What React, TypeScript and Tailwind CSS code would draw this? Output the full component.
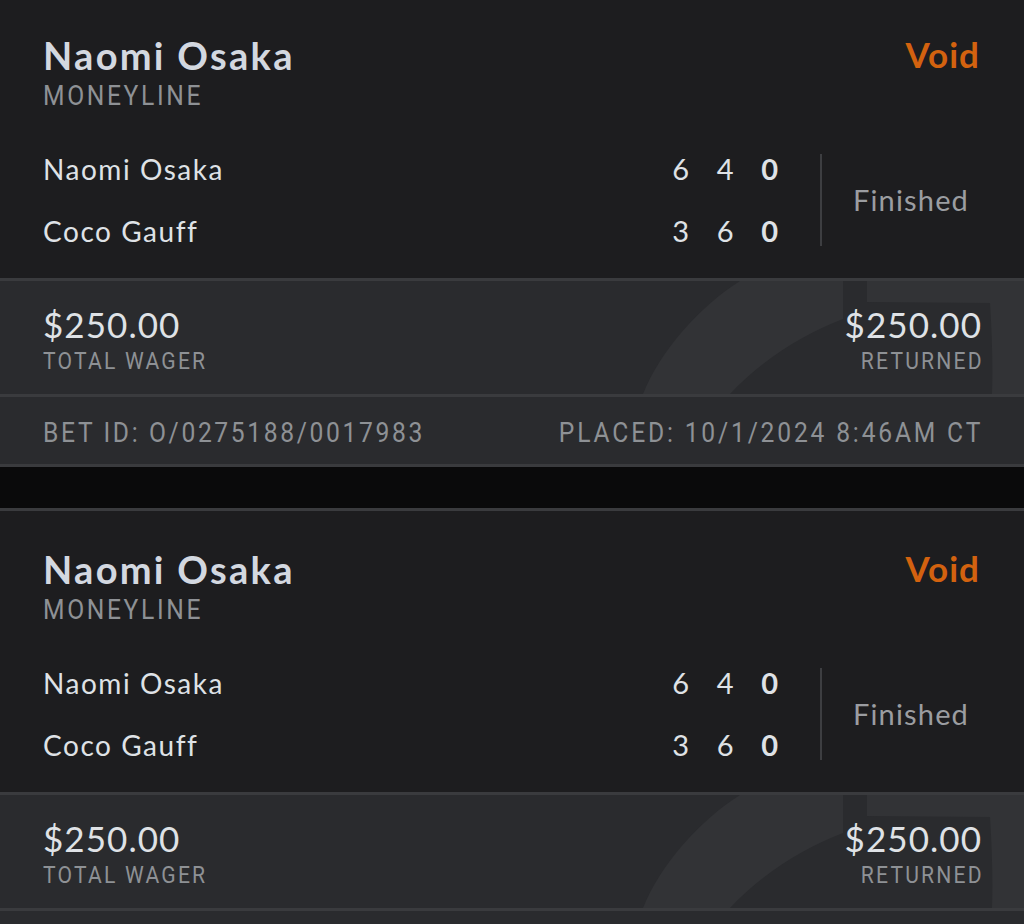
import React from "react"

type Bet = {
  title: string
  market: string
  players: { name: string; sets: number[] }[]
  status: string
  result: string
  wager: string
  returned: string
  betId: string
  placed: string
}

const BETS: Bet[] = [
  {
    title: "Naomi Osaka",
    market: "MONEYLINE",
    players: [
      { name: "Naomi Osaka", sets: [6, 4, 0] },
      { name: "Coco Gauff", sets: [3, 6, 0] },
    ],
    status: "Finished",
    result: "Void",
    wager: "$250.00",
    returned: "$250.00",
    betId: "BET ID: O/0275188/0017983",
    placed: "PLACED: 10/1/2024 8:46AM CT",
  },
  {
    title: "Naomi Osaka",
    market: "MONEYLINE",
    players: [
      { name: "Naomi Osaka", sets: [6, 4, 0] },
      { name: "Coco Gauff", sets: [3, 6, 0] },
    ],
    status: "Finished",
    result: "Void",
    wager: "$250.00",
    returned: "$250.00",
    betId: "BET ID: O/0275188/0017983",
    placed: "PLACED: 10/1/2024 8:46AM CT",
  },
]

const sans = "font-['Lato','Open_Sans',sans-serif]"
// condensed caps labels
const narrow = "font-['Roboto',sans-serif] inline-block scale-x-[0.88]"

// faint logo mark behind the wager row
function Watermark() {
  return (
    <svg
      className="absolute right-0 top-0 h-[113px] w-[394px]"
      viewBox="0 0 394 113"
      fill="none"
    >
      <path d="M13 113 C 30 70 70 25 110 0 L394 0 L394 113 Z" fill="#323336" />
      <path
        d="M100 113 C 130 80 175 52 213 38 L213 0 L237 0 L237 21 L360 22 C 362 55 363 85 362 113 Z"
        fill="#2a2b2e"
      />
    </svg>
  )
}

function BetCard({ bet }: { bet: Bet }) {
  return (
    <div className="border-t-[3px] border-[#3a3b3e]">
      <div className="flex h-[281px] flex-col bg-[#1d1d1f] pl-[43px] pr-[44px]">
        <div className="flex items-start justify-between pt-[36px]">
          <div>
            <div className={`${sans} text-[38px] font-bold leading-[44px] tracking-[0.06em] text-[#d3d8e0]`}>
              {bet.title}
            </div>
            <div className="pt-[3px] leading-[32px]">
              <span className={`${narrow} origin-left text-[28px] tracking-[3px] text-[#8e9195]`}>
                {bet.market}
              </span>
            </div>
          </div>
          <div className={`${sans} pt-[1px] text-[35px] font-bold leading-[40px] tracking-[0.03em] text-[#d3620f]`}>
            {bet.result}
          </div>
        </div>

        <div className="mt-[34px] flex items-center">
          <div className="flex flex-1 flex-col gap-[22px]">
            {bet.players.map((p, i) => (
              <div key={i} className="flex items-center justify-between">
                <span className={`${sans} text-[28px] leading-[40px] tracking-[0.055em] text-[#dfe2e6]`}>
                  {p.name}
                </span>
                <div className="flex">
                  {p.sets.map((s, j) => (
                    <span
                      key={j}
                      className={`${sans} w-[44.5px] text-center text-[29px] leading-[40px] text-[#dfe2e6] ${
                        j === p.sets.length - 1 ? "font-bold" : ""
                      }`}
                    >
                      {s}
                    </span>
                  ))}
                </div>
              </div>
            ))}
          </div>
          <div className="ml-[28px] h-[92px] w-[2px] bg-[#3d3e41]" />
          <div className={`${sans} w-[158px] pl-[31px] text-[29px] leading-[40px] tracking-[0.04em] text-[#9b9da1]`}>
            {bet.status}
          </div>
        </div>
      </div>

      <div className="relative h-[116px] overflow-hidden border-t-[3px] border-[#3a3b3e] bg-[#2a2b2e]">
        <Watermark />
        <div className="relative flex justify-between pl-[43px] pr-[42px] pt-[23px]">
          <div>
            <div className={`${sans} text-[35px] leading-[40px] tracking-[0.03em] text-[#dfe2e6]`}>
              {bet.wager}
            </div>
            <div className="pt-[3px] leading-[28px]">
              <span className={`${narrow} origin-left text-[24px] tracking-[2.5px] text-[#8e9195]`}>
                TOTAL WAGER
              </span>
            </div>
          </div>
          <div className="flex flex-col items-end">
            <div className={`${sans} text-[35px] leading-[40px] tracking-[0.03em] text-[#dfe2e6]`}>
              {bet.returned}
            </div>
            <div className="-mr-[2px] pt-[3px] leading-[28px]">
              <span className={`${narrow} origin-right text-[24px] tracking-[2.5px] text-[#8e9195]`}>
                RETURNED
              </span>
            </div>
          </div>
        </div>
      </div>

      <div className="flex h-[73px] items-center justify-between border-y-[3px] border-[#3a3b3e] bg-[#2a2b2e] pl-[43px] pr-[41px] pt-[5px] text-[28px] text-[#8e9195]">
        <span className={`${narrow} origin-left tracking-[3px]`}>{bet.betId}</span>
        <span className={`${narrow} origin-right tracking-[3.2px]`}>{bet.placed}</span>
      </div>
    </div>
  )
}

export default function App() {
  return (
    <div className="h-[924px] w-[1024px] overflow-hidden bg-[#0a0a0b]">
      <div className="-mt-[6px] flex flex-col gap-[41px]">
        {BETS.map((b, i) => (
          <BetCard key={i} bet={b} />
        ))}
      </div>
    </div>
  )
}
